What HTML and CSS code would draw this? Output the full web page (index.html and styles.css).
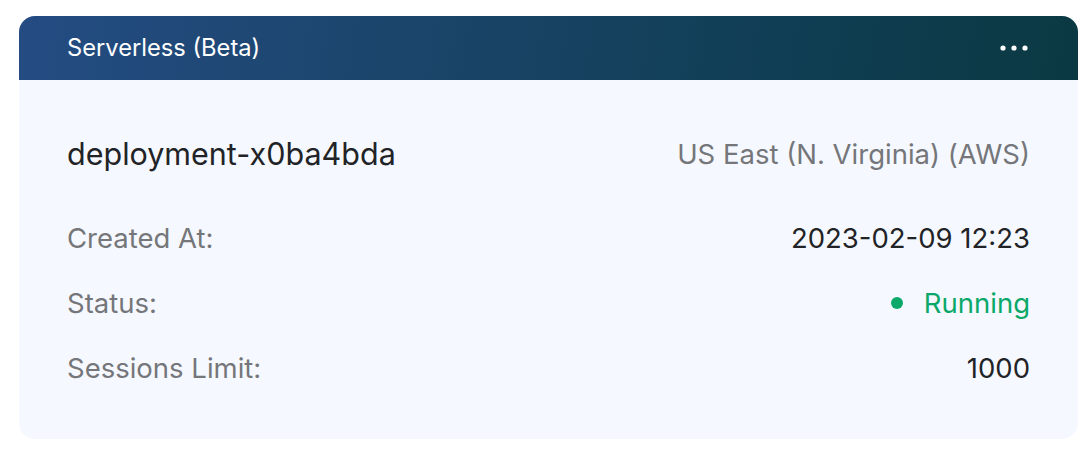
FILE: index.html
```html
<!DOCTYPE html>
<html>
<head>
<meta charset="utf-8">
<link rel="stylesheet" href="styles.css">
</head>
<body>
<div class="page">
  <div class="card">
    <div class="card-header">
      <span class="card-title">Serverless (Beta)</span>
      <button class="more" aria-label="More">
        <svg width="28" height="6" viewBox="0 0 28 6"><circle cx="3" cy="3" r="2.6" fill="#fff"/><circle cx="14" cy="3" r="2.6" fill="#fff"/><circle cx="25" cy="3" r="2.6" fill="#fff"/></svg>
      </button>
    </div>
    <div class="card-body">
      <div class="row name-row">
        <span class="name">deployment-x0ba4bda</span>
        <span class="region">US East (N. Virginia) (AWS)</span>
      </div>
      <div class="row">
        <span class="label">Created At:</span>
        <span class="value">2023-02-09 12:23</span>
      </div>
      <div class="row">
        <span class="label">Status:</span>
        <span class="value status"><span class="dot"></span>Running</span>
      </div>
      <div class="row">
        <span class="label">Sessions Limit:</span>
        <span class="value">1000</span>
      </div>
    </div>
  </div>
</div>
</body>
</html>
```
FILE: styles.css
```css
html, body {
  margin: 0;
  padding: 0;
  background: #ffffff;
}
body {
  font-family: Inter, "Noto Sans", "Liberation Sans", sans-serif;
}
.page {
  padding: 16px 14px 12px 19px;
}
.card {
  border-radius: 16px;
  overflow: hidden;
  background: #f5f9ff;
}
.card-header {
  height: 64px;
  display: flex;
  align-items: center;
  justify-content: space-between;
  padding: 0 48px;
  background: linear-gradient(100deg, #244c83 0%, #1a4468 40%, #0f3d52 75%, #0b3942 100%);
}
.card-title {
  color: #ffffff;
  font-size: 23.7px;
  font-weight: 400;
  line-height: 30px;
}
.more {
  background: none;
  border: 0;
  padding: 0;
  display: flex;
  margin-right: 2px;
}
.card-body {
  padding: 54px 48px 51px 48px;
  display: flex;
  flex-direction: column;
  gap: 25px;
}
.row {
  display: flex;
  justify-content: space-between;
  align-items: center;
  height: 40px;
  line-height: 40px;
}
.name-row {
  margin-bottom: 19px;
}
.name {
  font-size: 30.5px;
  color: #222326;
}
.region {
  font-size: 27.5px;
  color: #75767a;
}
.label {
  font-size: 27.5px;
  color: #75767a;
}
.value {
  font-size: 27.5px;
  color: #222326;
}
.status {
  color: #0ba86a;
  display: flex;
  align-items: center;
}
.dot {
  width: 12px;
  height: 12px;
  border-radius: 50%;
  background: #0ba86a;
  margin-right: 21px;
}
```
